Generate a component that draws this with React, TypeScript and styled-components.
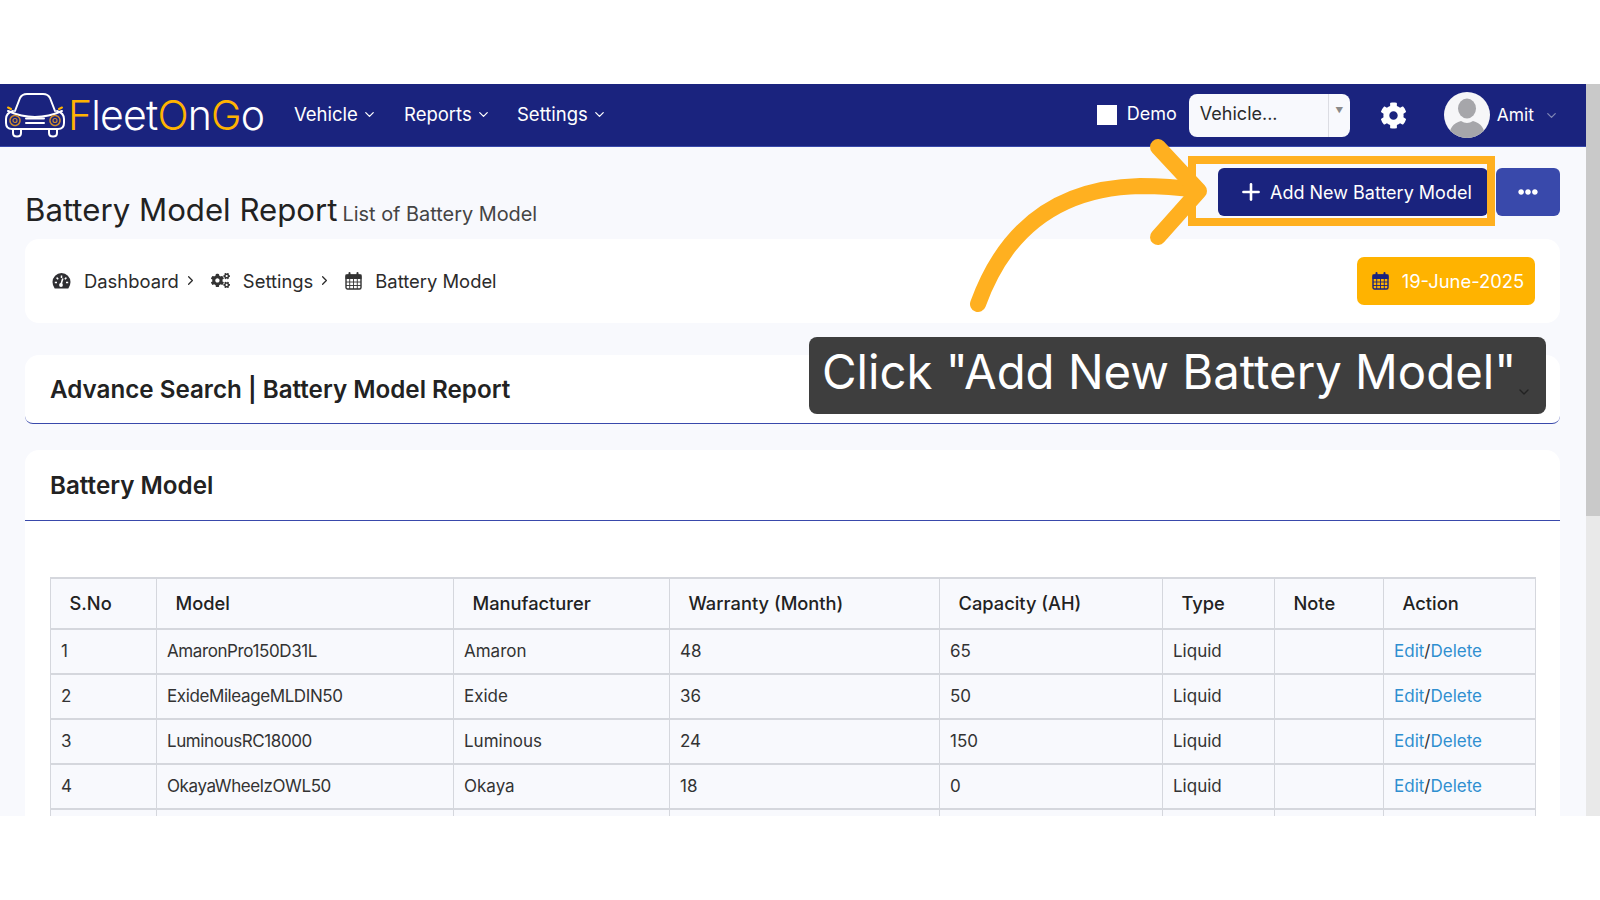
import { FC } from 'react';
import styled, { createGlobalStyle } from 'styled-components';
import { ChevronDown, ChevronRight, Plus } from 'lucide-react';
import { FaCog, FaCogs, FaEllipsisH } from 'react-icons/fa';

const colors = {
  navy: '#1a237e',
  indigo: '#3949ab',
  amber: '#ffb300',
  marker: '#ffb020',
  page: '#f8f9fd',
  ink: '#2b2b2b',
  line: '#d5d7dd',
  link: '#2f8fd0',
};

const GlobalStyle = createGlobalStyle`
  html, body {
    margin: 0;
    padding: 0;
    height: 100%;
    overflow: hidden;
    background: #fff;
  }
  body {
    font-family: Inter, "Open Sans", sans-serif;
    color: ${colors.ink};
  }
`;

const Stage = styled.div`
  padding-top: 84px;
`;

const Frame = styled.div`
  position: relative;
  height: 732px;
  overflow: hidden;
  display: flex;
`;

const Main = styled.div`
  width: 1586px;
  background: ${colors.page};
`;

const Scrollbar = styled.div`
  width: 14px;
  background: #e9e9e9;

  &::before {
    content: '';
    display: block;
    height: 432px;
    background: #c9c9c9;
  }
`;

const Navbar = styled.nav`
  height: 63px;
  background: ${colors.navy};
  display: flex;
  align-items: center;
  color: #fff;
  border-bottom: 1px solid #3949ab;
  box-sizing: border-box;
`;

const Logo = styled.div`
  display: flex;
  align-items: center;
  margin-left: 5px;
  width: 289px;
`;

const LogoText = styled.span`
  font-weight: 300;
  font-size: 41px;
  letter-spacing: -0.8px;
  margin-left: 3px;
  color: #fff;
`;

const LogoAccent = styled.span`
  color: ${colors.amber};
`;

const NavItem = styled.div<{ $width: number }>`
  width: ${(p) => p.$width}px;
  display: flex;
  align-items: center;
  gap: 4px;
  font-size: 18.5px;
  padding-bottom: 2px;
`;

const NavRight = styled.div`
  margin-left: auto;
  display: flex;
  align-items: center;
  padding-right: 27px;
`;

const Check = styled.span`
  width: 20px;
  height: 20px;
  background: #fff;
  margin-right: 10px;
`;

const DemoLabel = styled.span`
  font-size: 18px;
  margin-right: 12px;
  padding-bottom: 3px;
`;

const Select = styled.div`
  width: 161px;
  height: 43px;
  box-sizing: border-box;
  background: ${colors.page};
  border-radius: 8px;
  color: ${colors.ink};
  display: flex;
  align-items: center;
  font-size: 18px;
  padding-left: 11px;
`;

const SelectValue = styled.span`
  flex: 1;
  padding-bottom: 4px;
`;

const SelectCaret = styled.span`
  width: 22px;
  height: 100%;
  border-left: 1px solid #dcdde3;
  color: #8a8a8a;
  font-size: 8px;
  display: flex;
  justify-content: center;
  padding-top: 11px;
  box-sizing: border-box;
`;

const GearWrap = styled.span`
  margin-left: 30px;
  margin-right: 37px;
  display: flex;
  font-size: 27px;
`;

const Avatar = styled.svg`
  width: 46px;
  height: 46px;
  margin-right: 7px;
`;

const UserName = styled.span`
  font-size: 17.4px;
  margin-right: 10px;
  padding-bottom: 2px;
`;

const TitleRow = styled.div`
  display: flex;
  align-items: center;
  justify-content: space-between;
  padding: 21px 26px 0 25px;
  height: 48px;
`;

const Heading = styled.div`
  display: flex;
  align-items: baseline;
  gap: 5px;
  margin-top: 35px;
`;

const PageTitle = styled.h1`
  margin: 0;
  font-size: 31.2px;
  font-weight: 400;
  color: #222;
`;

const PageSub = styled.span`
  font-size: 19.9px;
  color: #444;
`;

const Actions = styled.div`
  display: flex;
  gap: 8px;
`;

const AddButton = styled.button`
  width: 270px;
  height: 48px;
  background: ${colors.navy};
  color: #fff;
  border: 0;
  border-radius: 6px;
  display: flex;
  align-items: center;
  gap: 6px;
  padding: 0 0 0 20px;
  font: inherit;
  font-size: 18px;
`;

const MoreButton = styled.button`
  width: 64px;
  height: 48px;
  background: ${colors.indigo};
  color: #fff;
  border: 0;
  border-radius: 6px;
  display: flex;
  align-items: center;
  justify-content: center;
  font-size: 20px;
`;

const Card = styled.section`
  background: #fff;
  border-radius: 14px;
  margin: 0 26px 0 25px;
`;

const CrumbCard = styled(Card)`
  margin-top: 23px;
  height: 84px;
  display: flex;
  align-items: center;
  justify-content: space-between;
  padding: 0 25px 0 27px;
`;

const Crumbs = styled.div`
  display: flex;
  align-items: center;
  font-size: 18.4px;
  padding-bottom: 1px;
`;

const CrumbIcon = styled.span`
  display: flex;
  font-size: 19px;
  margin-right: 13px;
  color: #333;
`;

const CrumbSep = styled.span`
  display: flex;
  margin: 0 13px 0 4px;
`;

const DateChip = styled.div`
  width: 178px;
  height: 48px;
  box-sizing: border-box;
  padding-left: 4px;
  background: ${colors.amber};
  color: #fff;
  border-radius: 7px;
  display: flex;
  align-items: center;
  justify-content: center;
  gap: 13px;
  font-size: 18.4px;
`;

const SearchCard = styled(Card)`
  margin-top: 32px;
  height: 69px;
  box-sizing: border-box;
  border-bottom: 1px solid ${colors.indigo};
  display: flex;
  align-items: center;
  justify-content: space-between;
  padding: 0 28px 0 25px;
  border-radius: 14px 14px 8px 8px;
`;

const CardTitle = styled.h2`
  margin: 0;
  font-size: 24.2px;
  font-weight: 600;
  color: #222;
`;

const CollapseToggle = styled.span`
  position: relative;
  z-index: 3;
  display: flex;
  margin-top: 5px;
`;

const TableCard = styled(Card)`
  margin-top: 26px;
  border-radius: 14px 14px 0 0;
`;

const TableHead = styled.div`
  height: 70px;
  border-bottom: 1px solid ${colors.indigo};
  display: flex;
  align-items: center;
  padding-left: 25px;
`;

const TableBody = styled.div`
  padding: 56px 25px 0;
`;

const Table = styled.table`
  width: 100%;
  border-collapse: collapse;
  table-layout: fixed;
  background: ${colors.page};
  font-size: 17px;
`;

const Th = styled.th<{ $width: number }>`
  width: ${(p) => p.$width}px;
  height: 51px;
  box-sizing: border-box;
  padding: 0 18.5px 2px;
  border: solid ${colors.line};
  border-width: 2px 1px;
  text-align: left;
  font-weight: 500;
  font-size: 18.3px;
  color: #222;
`;

const Td = styled.td<{ $tight?: boolean }>`
  height: 45px;
  box-sizing: border-box;
  padding: 0 10px 2px;
  border: solid ${colors.line};
  border-width: 2px 1px;
  color: #333;
  letter-spacing: ${(p) => (p.$tight ? '-0.4px' : 'normal')};
`;

const EditLink = styled.a`
  color: ${colors.link};
`;

const Marker = styled.svg`
  position: absolute;
  left: 0;
  top: -84px;
  width: 1600px;
  height: 900px;
  pointer-events: none;
`;

const HighlightBox = styled.div`
  position: absolute;
  left: 1188px;
  top: 72px;
  width: 307px;
  height: 70px;
  box-sizing: border-box;
  border: 8px solid ${colors.marker};
`;

const Caption = styled.div`
  position: absolute;
  z-index: 2;
  left: 809px;
  top: 253px;
  width: 737px;
  height: 77px;
  box-sizing: border-box;
  padding-left: 13px;
  background: rgba(56, 56, 56, 0.97);
  border-radius: 8px;
  color: #fff;
  font-size: 47.3px;
  line-height: 70px;
  white-space: nowrap;
`;

const columns = [
  { label: 'S.No', width: 106 },
  { label: 'Model', width: 297 },
  { label: 'Manufacturer', width: 216 },
  { label: 'Warranty (Month)', width: 270 },
  { label: 'Capacity (AH)', width: 223 },
  { label: 'Type', width: 112 },
  { label: 'Note', width: 109 },
  { label: 'Action', width: 152 },
];

const rows = [
  { no: 1, model: 'AmaronPro150D31L', maker: 'Amaron', warranty: 48, capacity: 65 },
  { no: 2, model: 'ExideMileageMLDIN50', maker: 'Exide', warranty: 36, capacity: 50 },
  { no: 3, model: 'LuminousRC18000', maker: 'Luminous', warranty: 24, capacity: 150 },
  { no: 4, model: 'OkayaWheelzOWL50', maker: 'Okaya', warranty: 18, capacity: 0 },
];

const CarLogo: FC = () => (
  <svg width="60" height="46" viewBox="0 0 60 46" fill="none" stroke="#fff" strokeWidth="2" strokeLinecap="round" strokeLinejoin="round">
    <path d="M10 19 L15 6 Q17 2 22 2 H38 Q43 2 45 6 L50 19" />
    <path d="M6 17 L3 15.5 M54 17 L57 15.5" stroke="#ffb300" />
    <path d="M3 19 Q30 31 57 19" />
    <path d="M8 19 Q1 21 1 27 V31 Q1 37 7 37 H53 Q59 37 59 31 V27 Q59 21 52 19" />
    <path d="M21 26.5 H39 M21 31 H39" />
    <path d="M8 37 V41 Q8 44.5 12 44.5 Q16 44.5 16 41 V37 M44 37 V41 Q44 44.5 48 44.5 Q52 44.5 52 41 V37" />
    <circle cx="10" cy="28.5" r="5" stroke="#c98a2e" strokeWidth="1.6" strokeDasharray="1.6 1" />
    <circle cx="10" cy="28.5" r="2" stroke="#c98a2e" strokeWidth="1.2" />
    <circle cx="50" cy="28.5" r="5" stroke="#c98a2e" strokeWidth="1.6" strokeDasharray="1.6 1" />
    <circle cx="50" cy="28.5" r="2" stroke="#c98a2e" strokeWidth="1.2" />
  </svg>
);

const UserAvatar: FC = () => (
  <Avatar viewBox="0 0 46 46">
    <clipPath id="avatar-clip">
      <circle cx="23" cy="23" r="23" />
    </clipPath>
    <circle cx="23" cy="23" r="23" fill="#f6f6f8" />
    <g clipPath="url(#avatar-clip)" fill="#a6a6aa">
      <ellipse cx="23" cy="16.5" rx="9" ry="10" />
      <path d="M5 46 Q5 32 17 29 Q23 33 29 29 Q41 32 41 46 Z" />
    </g>
  </Avatar>
);

const GaugeIcon: FC = () => (
  <svg width="19" height="18" viewBox="0 0 19 18">
    <path d="M9.5 1 A9 9 0 0 1 18.5 10 Q18.5 13.5 16.3 16.5 H2.7 Q0.5 13.5 0.5 10 A9 9 0 0 1 9.5 1 Z" fill="#2f2f33" />
    <path d="M9.5 3.5 V6 M4.6 5.6 L6.2 7.2 M14.4 5.6 L12.8 7.2 M2.8 10.5 H5 M14 10.5 H16.2" stroke="#fff" strokeWidth="1.5" />
    <path d="M10.8 6.5 L9 12.5" stroke="#fff" strokeWidth="1.6" />
    <circle cx="9" cy="13" r="1.9" fill="#fff" />
  </svg>
);

const CalendarIcon: FC<{ color: string }> = ({ color }) => (
  <svg width="17" height="18" viewBox="0 0 17 18" fill="none" stroke={color}>
    <rect x="1" y="3" width="15" height="14" rx="1.5" strokeWidth="1.4" />
    <rect x="1" y="3" width="15" height="3.5" fill={color} strokeWidth="1" />
    <path d="M4.5 1 V5 M12.5 1 V5" strokeWidth="2" strokeLinecap="round" />
    <path d="M1 10 H16 M1 13.5 H16 M4.7 6.5 V17 M8.5 6.5 V17 M12.3 6.5 V17" strokeWidth="0.9" />
  </svg>
);

export default function App() {
  return (
    <>
      <GlobalStyle />
      <Stage>
        <Frame>
          <Main>
            <Navbar>
              <Logo>
                <CarLogo />
                <LogoText>
                  <LogoAccent>F</LogoAccent>leet<LogoAccent>O</LogoAccent>n<LogoAccent>G</LogoAccent>o
                </LogoText>
              </Logo>
              <NavItem $width={110}>
                Vehicle <ChevronDown size={15} />
              </NavItem>
              <NavItem $width={113}>
                Reports <ChevronDown size={15} />
              </NavItem>
              <NavItem $width={110}>
                Settings <ChevronDown size={15} />
              </NavItem>
              <NavRight>
                <Check />
                <DemoLabel>Demo</DemoLabel>
                <Select>
                  <SelectValue>Vehicle...</SelectValue>
                  <SelectCaret>▼</SelectCaret>
                </Select>
                <GearWrap>
                  <FaCog />
                </GearWrap>
                <UserAvatar />
                <UserName>Amit</UserName>
                <ChevronDown size={15} color="#7f86b5" />
              </NavRight>
            </Navbar>

            <TitleRow>
              <Heading>
                <PageTitle>Battery Model Report</PageTitle>
                <PageSub>List of Battery Model</PageSub>
              </Heading>
              <Actions>
                <AddButton>
                  <Plus size={26} strokeWidth={2.4} />
                  Add New Battery Model
                </AddButton>
                <MoreButton>
                  <FaEllipsisH />
                </MoreButton>
              </Actions>
            </TitleRow>

            <CrumbCard>
              <Crumbs>
                <CrumbIcon>
                  <GaugeIcon />
                </CrumbIcon>
                Dashboard
                <CrumbSep>
                  <ChevronRight size={15} />
                </CrumbSep>
                <CrumbIcon>
                  <FaCogs />
                </CrumbIcon>
                Settings
                <CrumbSep>
                  <ChevronRight size={15} />
                </CrumbSep>
                <CrumbIcon>
                  <CalendarIcon color="#333" />
                </CrumbIcon>
                Battery Model
              </Crumbs>
              <DateChip>
                <CalendarIcon color={colors.navy} />
                19-June-2025
              </DateChip>
            </CrumbCard>

            <SearchCard>
              <CardTitle>Advance Search | Battery Model Report</CardTitle>
              <CollapseToggle>
                <ChevronDown size={16} color="#222" />
              </CollapseToggle>
            </SearchCard>

            <TableCard>
              <TableHead>
                <CardTitle>Battery Model</CardTitle>
              </TableHead>
              <TableBody>
                <Table>
                  <thead>
                    <tr>
                      {columns.map((c) => (
                        <Th key={c.label} $width={c.width}>
                          {c.label}
                        </Th>
                      ))}
                    </tr>
                  </thead>
                  <tbody>
                    {rows.map((r) => (
                      <tr key={r.no}>
                        <Td>{r.no}</Td>
                        <Td $tight>{r.model}</Td>
                        <Td>{r.maker}</Td>
                        <Td>{r.warranty}</Td>
                        <Td>{r.capacity}</Td>
                        <Td>Liquid</Td>
                        <Td />
                        <Td>
                          <EditLink>Edit</EditLink>/<EditLink>Delete</EditLink>
                        </Td>
                      </tr>
                    ))}
                    <tr>
                      {columns.map((c) => (
                        <Td key={c.label} />
                      ))}
                    </tr>
                  </tbody>
                </Table>
              </TableBody>
            </TableCard>
          </Main>
          <Scrollbar />

          <HighlightBox />
          <Marker viewBox="0 0 1600 900" fill="none" stroke={colors.marker} strokeWidth="16" strokeLinecap="round" strokeLinejoin="round">
            <path d="M978 304 C1003 235 1052 188 1140 186 Q1170 186 1197 190" />
            <path d="M1158 147 L1199 191 L1158 237" />
          </Marker>
          <Caption>Click "Add New Battery Model"</Caption>
        </Frame>
      </Stage>
    </>
  );
}
